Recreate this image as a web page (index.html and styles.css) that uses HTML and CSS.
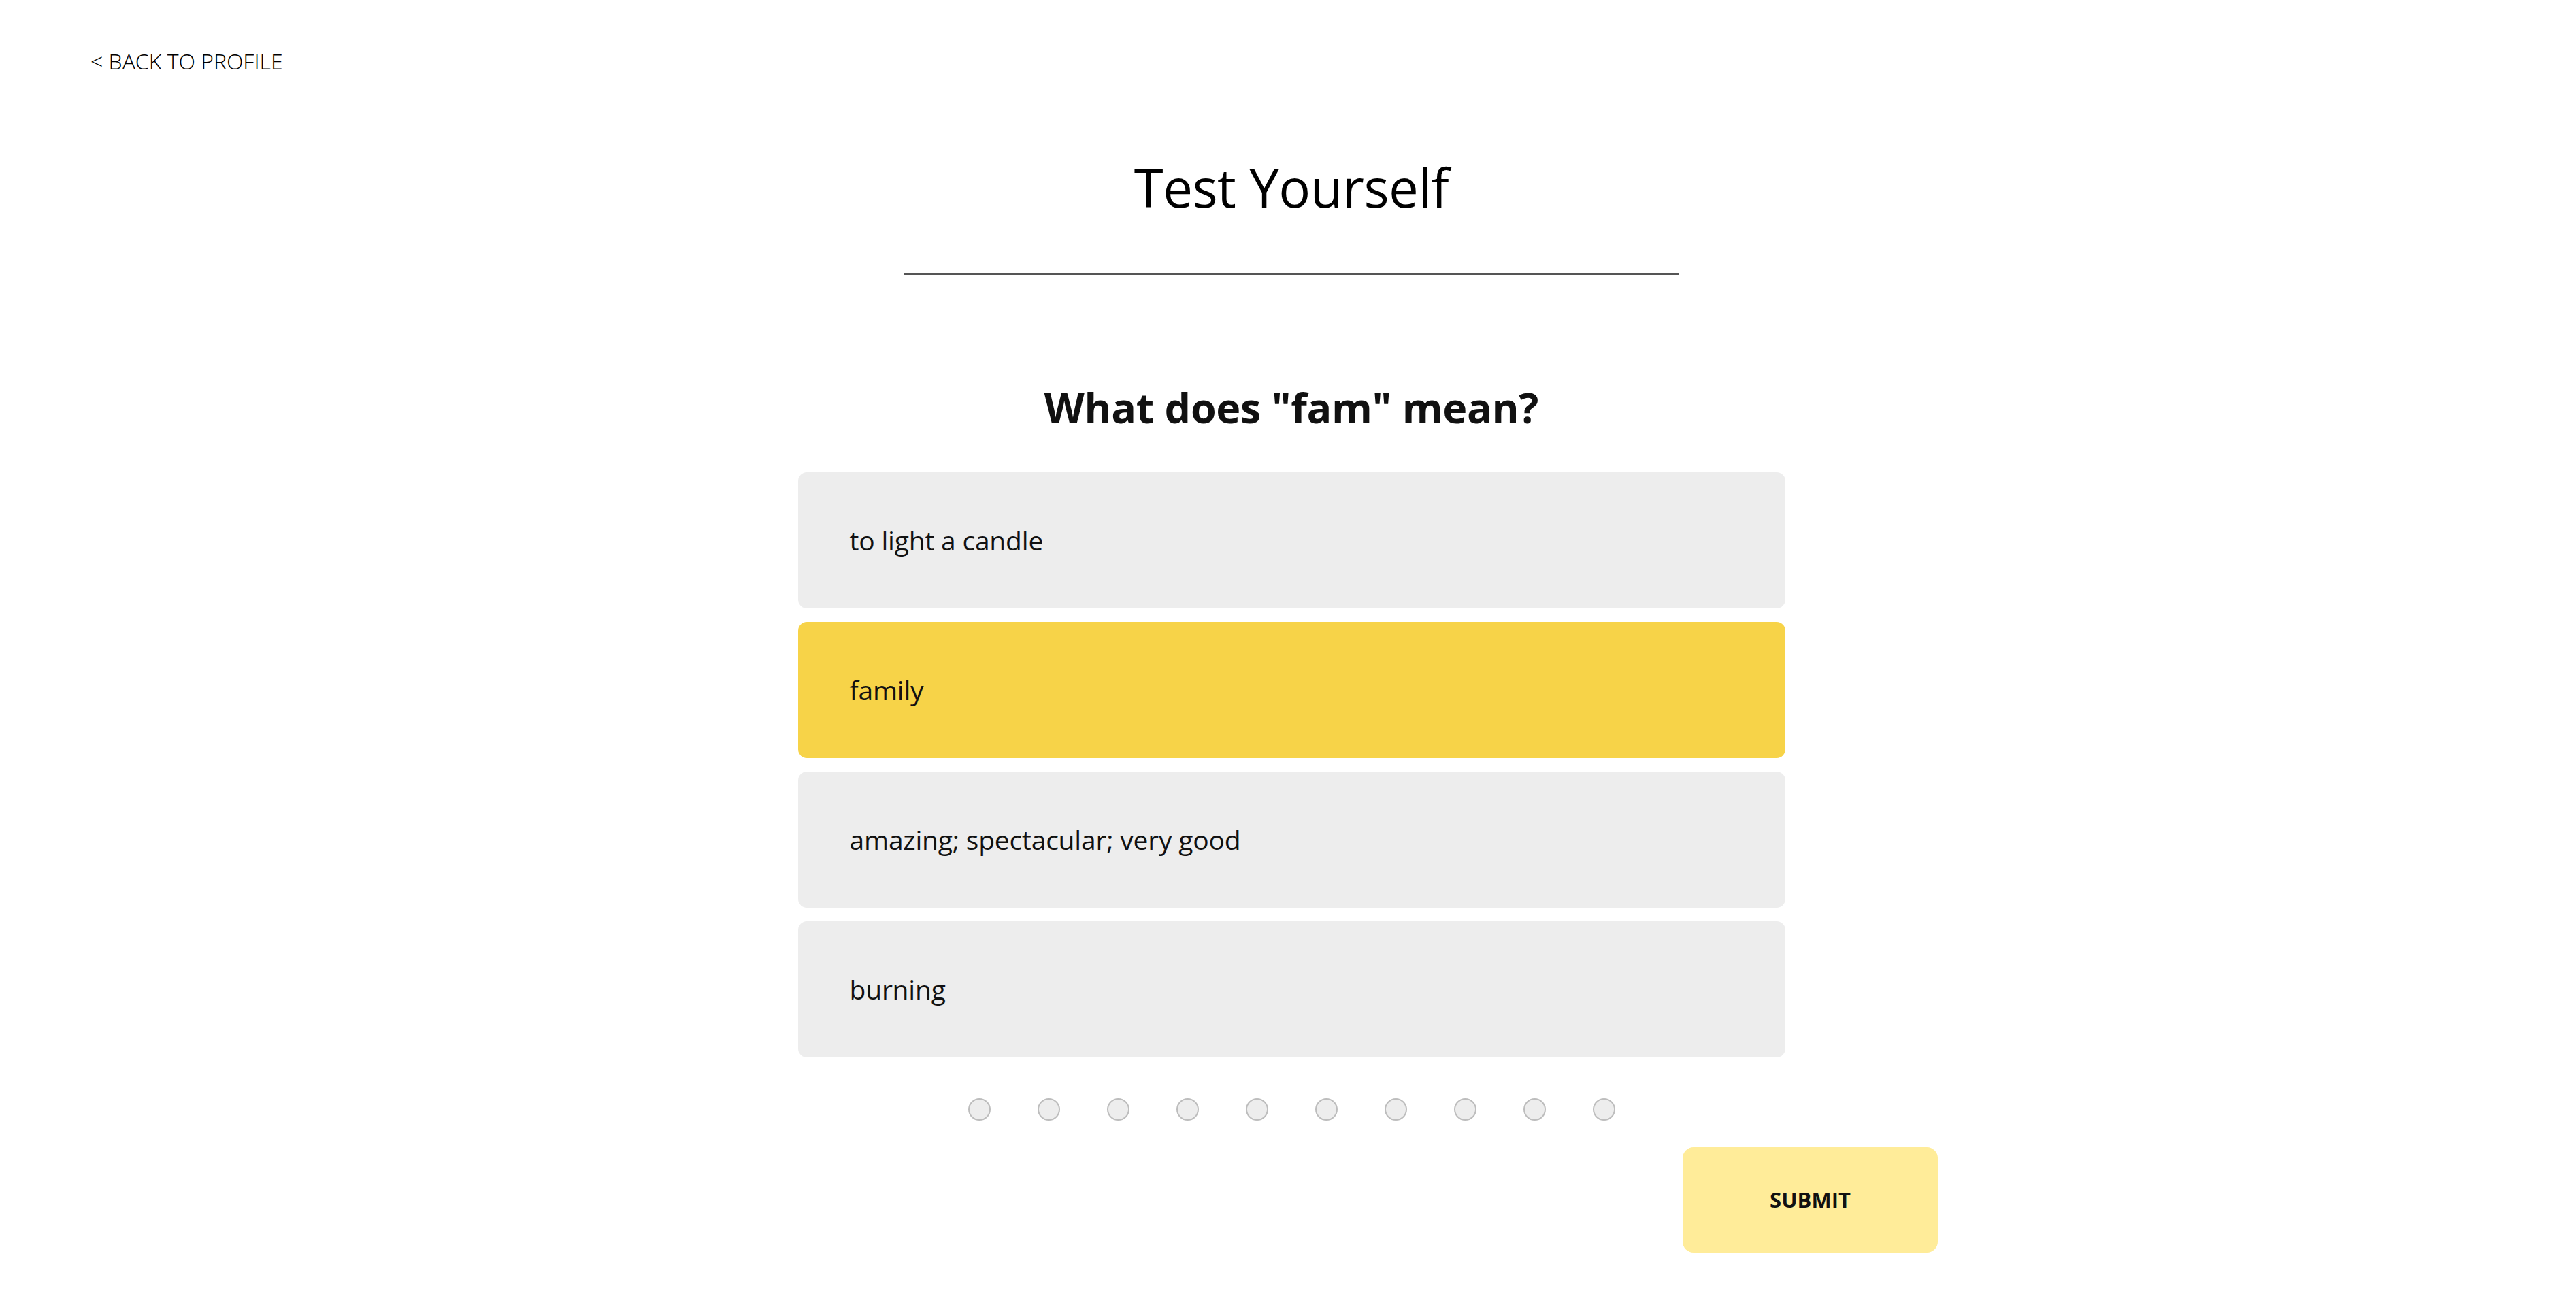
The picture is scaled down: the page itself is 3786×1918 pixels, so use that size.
FILE: index.html
```html
<!DOCTYPE html>
<html lang="en">
<head>
<meta charset="utf-8">
<title>Test Yourself</title>
<link rel="stylesheet" href="styles.css">
</head>
<body>
<header class="topbar">
  <a class="back-link" href="#">&lt; BACK TO PROFILE</a>
</header>
<main class="page">
  <h1 class="title">Test Yourself</h1>
  <hr class="divider">
  <h2 class="question">What does "fam" mean?</h2>
  <ul class="answers">
    <li class="answer">to light a candle</li>
    <li class="answer answer--selected">family</li>
    <li class="answer">amazing; spectacular; very good</li>
    <li class="answer">burning</li>
  </ul>
  <div class="progress">
    <span class="dot"></span><span class="dot"></span><span class="dot"></span><span class="dot"></span><span class="dot"></span>
    <span class="dot"></span><span class="dot"></span><span class="dot"></span><span class="dot"></span><span class="dot"></span>
  </div>
  <div class="actions">
    <button class="submit" type="button">SUBMIT</button>
  </div>
</main>
</body>
</html>
```
FILE: styles.css
```css
* { box-sizing: border-box; }

html, body {
  margin: 0;
  padding: 0;
  background: #ffffff;
  font-family: "Open Sans", "Noto Sans", "Liberation Sans", sans-serif;
  color: #111111;
}

.topbar {
  padding: 68px 0 0 133px;
}

.back-link {
  display: inline-block;
  font-size: 32px;
  line-height: 43px;
  font-weight: 300;
  color: #000000;
  text-decoration: none;
  letter-spacing: 0;
}

.page {
  padding-left: 10px;
  display: flex;
  flex-direction: column;
  align-items: center;
}

.title {
  margin: 110px 0 0 0;
  font-size: 78px;
  line-height: 109px;
  font-weight: 400;
  color: #000000;
  letter-spacing: -0.5px;
}

.divider {
  width: 1140px;
  margin: 71px 0 0 0;
  border: 0;
  border-top: 3px solid #555555;
  height: 0;
}

.question {
  margin: 153px 0 0 0;
  font-size: 61px;
  line-height: 84px;
  font-weight: 700;
  color: #111111;
  letter-spacing: -0.3px;
}

.answers {
  list-style: none;
  margin: 53px 0 0 0;
  padding: 0;
  width: 1451px;
  display: flex;
  flex-direction: column;
  gap: 20px;
}

.answer {
  height: 200px;
  display: flex;
  align-items: center;
  padding-left: 76px;
  padding-bottom: 2px;
  background: #ededed;
  border-radius: 13px;
  font-size: 39px;
  color: #111111;
  letter-spacing: -0.2px;
}

.answer--selected {
  background: #f7d348;
}

.progress {
  margin-top: 60px;
  display: flex;
  gap: 69px;
}

.dot {
  width: 33px;
  height: 33px;
  border-radius: 50%;
  background: #ededed;
  border: 2px solid #bdbdbd;
}

.actions {
  width: 1900px;
  margin-top: 39px;
  display: flex;
  justify-content: flex-end;
}

.submit {
  width: 375px;
  height: 155px;
  border: 0;
  border-radius: 16px;
  background: #ffec99;
  font-family: "Open Sans", "Noto Sans", "Liberation Sans", sans-serif;
  font-size: 31px;
  font-weight: 700;
  color: #111111;
  padding-bottom: 3px;
  cursor: pointer;
}
```
